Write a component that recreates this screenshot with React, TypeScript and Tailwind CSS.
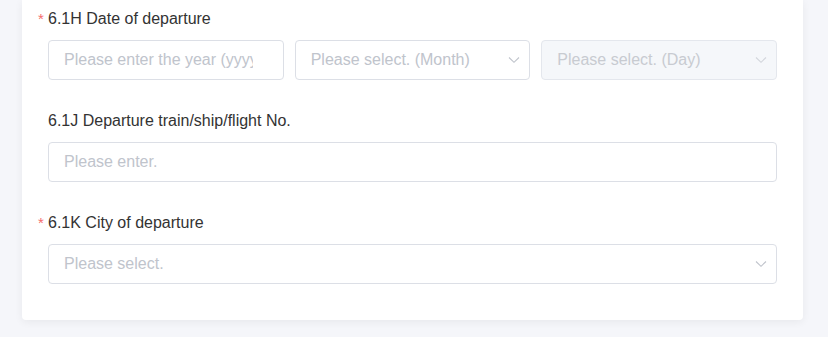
import React from "react";

const font = { fontFamily: '"Liberation Sans", Arial, sans-serif' };

function Chevron({ light }: { light?: boolean }) {
  return (
    <svg
      width="12"
      height="8"
      viewBox="0 0 12 8"
      className={`absolute right-[10px] top-1/2 -translate-y-1/2 ${light ? "text-[#d3d6dc]" : "text-[#c0c4cc]"}`}
      fill="none"
      stroke="currentColor"
      strokeWidth="1.1"
    >
      <path d="M1 1.5 L6 6.3 L11 1.5" />
    </svg>
  );
}

function Label({ text, required }: { text: string; required?: boolean }) {
  return (
    <div className="flex items-center h-[24px] mb-[9px] text-[16px] text-[#333333] leading-[24px]">
      {required ? (
        <span className="-ml-[10px] w-[10px] text-[#f56c6c] text-[15px]">*</span>
      ) : null}
      <span>{text}</span>
    </div>
  );
}

function TextInput({ placeholder }: { placeholder: string }) {
  return (
    <input
      readOnly
      placeholder={placeholder}
      className="w-full h-[40px] border border-[#dcdfe6] rounded-[4px] bg-white pl-[15px] pr-[30px] text-[16px] outline-none placeholder:text-[#c0c4cc]"
      style={font}
    />
  );
}

function SelectInput({ placeholder, disabled }: { placeholder: string; disabled?: boolean }) {
  return (
    <div className="relative w-full">
      <input
        readOnly
        placeholder={placeholder}
        className={`w-full h-[40px] border rounded-[4px] pl-[15px] pr-[30px] text-[16px] outline-none ${
          disabled
            ? "bg-[#f5f7fa] border-[#e4e7ed] placeholder:text-[#c8cbd1]"
            : "bg-white border-[#dcdfe6] placeholder:text-[#c0c4cc]"
        }`}
        style={font}
      />
      <Chevron light={disabled} />
    </div>
  );
}

export default function App() {
  return (
    <div className="w-[828px] h-[337px] bg-[#f5f6fa] overflow-hidden" style={font}>
      <div className="ml-[22px] w-[781px] bg-white rounded-b-[4px] shadow-[0_2px_8px_rgba(0,0,0,0.06)] pt-[7px] pb-[36px] px-[26px]">
        <div className="mb-[29px]">
          <Label text="6.1H Date of departure" required />
          <div className="grid grid-cols-3 gap-[11px]">
            <TextInput placeholder="Please enter the year (yyyy)" />
            <SelectInput placeholder="Please select. (Month)" />
            <SelectInput placeholder="Please select. (Day)" disabled />
          </div>
        </div>
        <div className="mb-[29px]">
          <Label text="6.1J Departure train/ship/flight No." />
          <TextInput placeholder="Please enter." />
        </div>
        <div>
          <Label text="6.1K City of departure" required />
          <SelectInput placeholder="Please select." />
        </div>
      </div>
    </div>
  );
}
